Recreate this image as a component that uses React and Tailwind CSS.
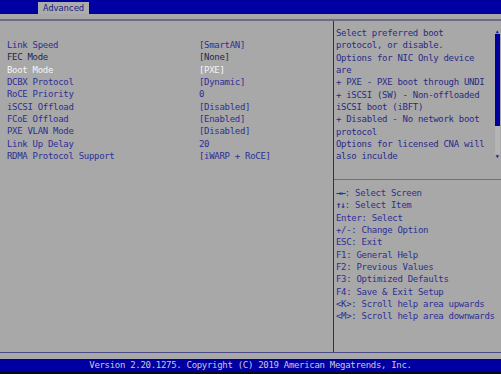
import React from "react";

const rows = [
  { label: "Link Speed", value: "[SmartAN]", tone: "blue" },
  { label: "FEC Mode", value: "[None]", tone: "dark" },
  { label: "Boot Mode", value: "[PXE]", tone: "sel" },
  { label: "DCBX Protocol", value: "[Dynamic]", tone: "blue" },
  { label: "RoCE Priority", value: "0", tone: "blue" },
  { label: "iSCSI Offload", value: "[Disabled]", tone: "blue" },
  { label: "FCoE Offload", value: "[Enabled]", tone: "blue" },
  { label: "PXE VLAN Mode", value: "[Disabled]", tone: "blue" },
  { label: "Link Up Delay", value: "20", tone: "blue" },
  { label: "RDMA Protocol Support", value: "[iWARP + RoCE]", tone: "blue" },
];

const help = [
  "Select preferred boot",
  "protocol, or disable.",
  "Options for NIC Only device",
  "are",
  "+ PXE - PXE boot through UNDI",
  "+ iSCSI (SW) - Non-offloaded",
  "iSCSI boot (iBFT)",
  "+ Disabled - No network boot",
  "protocol",
  "Options for licensed CNA will",
  "also inculde",
];

const keys = [
  ["→←", ": Select Screen"],
  ["↑↓", ": Select Item"],
  ["", "Enter: Select"],
  ["", "+/-: Change Option"],
  ["", "ESC: Exit"],
  ["", "F1: General Help"],
  ["", "F2: Previous Values"],
  ["", "F3: Optimized Defaults"],
  ["", "F4: Save & Exit Setup"],
  ["", "<K>: Scroll help area upwards"],
  ["", "<M>: Scroll help area downwards"],
];

const toneClass = {
  blue: "text-[#2e2e96]",
  dark: "text-[#26264a]",
  sel: "text-[#f4f4f4]",
};

export default function App() {
  return (
    <div
      className="w-[501px] h-[374px] bg-[#a8a8a8] flex flex-col overflow-hidden text-[9px] tracking-[-0.3px] leading-[12.33px]"
      style={{ fontFamily: '"DejaVu Sans Mono", "Liberation Mono", monospace' }}
    >
      {/* ---------------- TOP BAR ---------------- */}
      <div className="h-[14px] bg-[#0000a2] flex items-end pl-[38px]">
        <div className="w-[51px] h-[12px] bg-[#acacac] text-[#1e1e80] flex items-center justify-center leading-none">
          Advanced
        </div>
      </div>
      <div className="h-[5px]" />
      <div className="h-[2px] bg-[#6c6c88]" />

      {/* ---------------- MAIN ---------------- */}
      <div className="flex h-[331px]">
        <div className="w-[333px] pt-[18px] pl-[7px]">
          {rows.map((r) => (
            <div key={r.label} className={`flex h-[12.33px] ${toneClass[r.tone]}`}>
              <div className="w-[192px]">{r.label}</div>
              <div>{r.value}</div>
            </div>
          ))}
        </div>

        <div className="w-[1px] bg-[#26269a]" />

        <div className="flex-1 flex flex-col">
          <div className="h-[158px] flex">
            <div className="flex-1 pl-[2px] pt-[6px] text-[#2a2a86]">
              {help.map((t, i) => (
                <div key={i} className="h-[12.33px] whitespace-pre">{t}</div>
              ))}
            </div>
            <div className="w-[6px] mr-[1px] mt-[8px] flex flex-col items-center">
              <div className="text-[5px] leading-[5px] text-[#1a1a8a]">▲</div>
              <div className="w-[5px] h-[92px] bg-[#00009e]" />
              <div className="w-[5px] h-[28px] bg-[#b4b4b4]" />
              <div className="text-[5px] leading-[5px] text-[#1a1a8a]">▼</div>
            </div>
          </div>
          <div className="h-[1px] bg-[#6e6e84]" />
          <div className="pl-[2px] pt-[7px] text-[#2e2e96]">
            {keys.map(([a, t], i) => (
              <div key={i} className="h-[12.33px] whitespace-pre">
                {a && <span className="font-bold tracking-[-1px]">{a}</span>}
                {t}
              </div>
            ))}
          </div>
        </div>
      </div>

      {/* ---------------- BOTTOM ---------------- */}
      <div className="h-[1px] bg-[#4a4a86]" />
      <div className="h-[6px]" />
      <div className="h-[13px] bg-[#0000a2] text-[#c8c8d8] flex items-center justify-center leading-none">
        Version 2.20.1275. Copyright (C) 2019 American Megatrends, Inc.
      </div>
      <div className="flex-1 bg-[#0a0a14]" />
    </div>
  );
}
